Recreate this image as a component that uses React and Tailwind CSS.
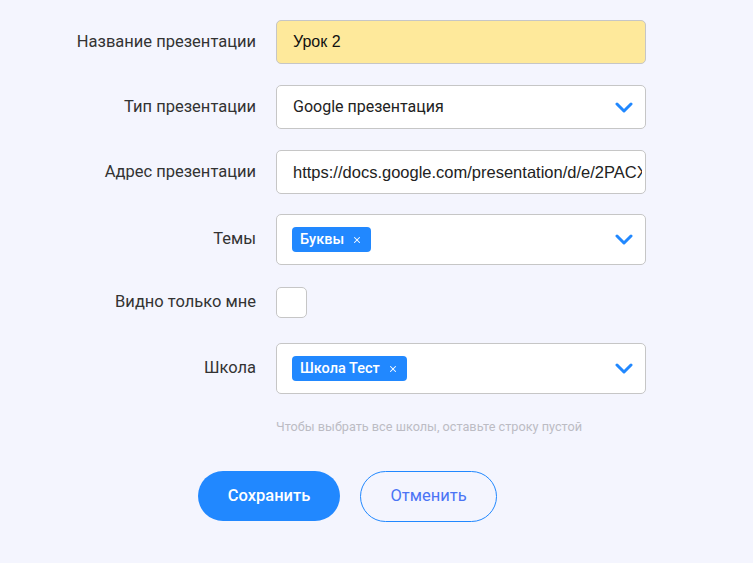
import { X } from 'lucide-react';

// Presentation edit form: label column on the left, fields on the right.
const font = { fontFamily: 'Roboto, "Noto Sans", sans-serif' };

function Chevron() {
  return (
    <svg width="18" height="11" viewBox="0 0 18 11" className="shrink-0">
      <path d="M2 2l7 7 7-7" fill="none" stroke="#2188ff" strokeWidth="3" strokeLinecap="round" strokeLinejoin="round" />
    </svg>
  );
}

function Chip({ children }) {
  return (
    <span className="inline-flex items-center h-[25px] pl-[8px] pr-[9px] rounded-[4px] bg-[#2188ff] text-white text-[14.5px] font-medium gap-[8px]">
      {children}
      <X className="w-[10px] h-[10px]" strokeWidth={2.5} />
    </span>
  );
}

function Row({ label, children, className = '' }) {
  return (
    <div className={`flex items-center ${className}`}>
      <div className="w-[276px] pr-[20px] text-right text-[16.5px] text-[#333]">{label}</div>
      <div className="w-[370px]">{children}</div>
    </div>
  );
}

export default function App() {
  return (
    <div className="min-h-[563px] w-[753px] bg-[#f4f5fe] pt-[20px]" style={font}>
      <Row label="Название презентации">
        <div className="h-[44px] rounded-[5px] border border-[#c6c6c6] bg-[#fee99b] px-[16px] flex items-center text-[16px] text-[#111]" style={{ fontFamily: '"Liberation Sans", Arial, sans-serif' }}>
          Урок 2
        </div>
      </Row>

      <Row label="Тип презентации" className="mt-[21px]">
        <div className="h-[44px] rounded-[5px] border border-[#c6c6c6] bg-white pl-[16px] pr-[12px] flex items-center justify-between text-[16px] text-[#222]">
          <span>Google презентация</span>
          <Chevron />
        </div>
      </Row>

      <Row label="Адрес презентации" className="mt-[21px]">
        <div className="h-[44px] rounded-[5px] border border-[#c6c6c6] bg-white pl-[16px] pr-[3px] flex items-center overflow-hidden whitespace-nowrap text-[16.5px] text-[#222]" style={{ fontFamily: '"Liberation Sans", Arial, sans-serif' }}>
          <span className="overflow-hidden">https://docs.google.com/presentation/d/e/2PACX-1vR</span>
        </div>
      </Row>

      <Row label="Темы" className="mt-[20px]">
        <div className="h-[51px] rounded-[5px] border border-[#c6c6c6] bg-white pl-[15px] pr-[12px] flex items-center justify-between">
          <Chip>Буквы</Chip>
          <Chevron />
        </div>
      </Row>

      <Row label="Видно только мне" className="mt-[22px]">
        <div className="w-[31px] h-[31px] rounded-[5px] border border-[#c6c6c6] bg-white" />
      </Row>

      <Row label="Школа" className="mt-[25px]">
        <div className="h-[51px] rounded-[5px] border border-[#c6c6c6] bg-white pl-[15px] pr-[12px] flex items-center justify-between">
          <Chip>Школа Тест</Chip>
          <Chevron />
        </div>
      </Row>

      <div className="pl-[276px] mt-[23px] text-[12.7px] text-[#bcbcc4]">Чтобы выбрать все школы, оставьте строку пустой</div>

      <div className="flex gap-[20px] pl-[198px] mt-[35px]">
        <button className="w-[142px] h-[50px] rounded-full bg-[#2188ff] text-white text-[16.5px] font-medium">Сохранить</button>
        <button className="w-[137px] h-[51px] rounded-full border border-[#2188ff] text-[#4b74f5] text-[16.5px]">Отменить</button>
      </div>
    </div>
  );
}
